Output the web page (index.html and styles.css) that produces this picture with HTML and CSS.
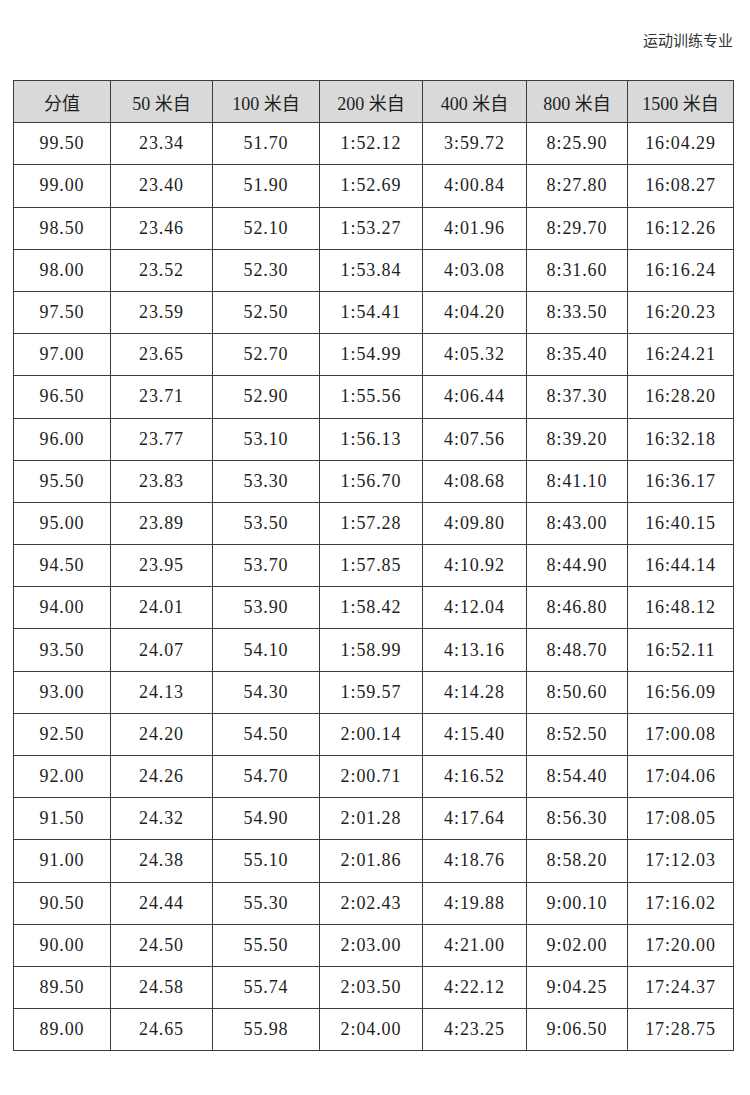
FILE: index.html
```html
<!DOCTYPE html>
<html lang="zh">
<head>
<meta charset="utf-8">
<title>运动训练专业</title>
<link rel="stylesheet" href="styles.css">
</head>
<body>
<div class="page">
  <div class="caption">运动训练专业</div>
  <table class="score">
    <colgroup>
      <col class="c1"><col class="c2"><col class="c3"><col class="c4"><col class="c5"><col class="c6"><col class="c7">
    </colgroup>
    <thead>
      <tr><th>分值</th><th>50 米自</th><th>100 米自</th><th>200 米自</th><th>400 米自</th><th>800 米自</th><th>1500 米自</th></tr>
    </thead>
    <tbody>
      <tr><td>99.50</td><td>23.34</td><td>51.70</td><td>1:52.12</td><td>3:59.72</td><td>8:25.90</td><td>16:04.29</td></tr>
      <tr><td>99.00</td><td>23.40</td><td>51.90</td><td>1:52.69</td><td>4:00.84</td><td>8:27.80</td><td>16:08.27</td></tr>
      <tr><td>98.50</td><td>23.46</td><td>52.10</td><td>1:53.27</td><td>4:01.96</td><td>8:29.70</td><td>16:12.26</td></tr>
      <tr><td>98.00</td><td>23.52</td><td>52.30</td><td>1:53.84</td><td>4:03.08</td><td>8:31.60</td><td>16:16.24</td></tr>
      <tr><td>97.50</td><td>23.59</td><td>52.50</td><td>1:54.41</td><td>4:04.20</td><td>8:33.50</td><td>16:20.23</td></tr>
      <tr><td>97.00</td><td>23.65</td><td>52.70</td><td>1:54.99</td><td>4:05.32</td><td>8:35.40</td><td>16:24.21</td></tr>
      <tr><td>96.50</td><td>23.71</td><td>52.90</td><td>1:55.56</td><td>4:06.44</td><td>8:37.30</td><td>16:28.20</td></tr>
      <tr><td>96.00</td><td>23.77</td><td>53.10</td><td>1:56.13</td><td>4:07.56</td><td>8:39.20</td><td>16:32.18</td></tr>
      <tr><td>95.50</td><td>23.83</td><td>53.30</td><td>1:56.70</td><td>4:08.68</td><td>8:41.10</td><td>16:36.17</td></tr>
      <tr><td>95.00</td><td>23.89</td><td>53.50</td><td>1:57.28</td><td>4:09.80</td><td>8:43.00</td><td>16:40.15</td></tr>
      <tr><td>94.50</td><td>23.95</td><td>53.70</td><td>1:57.85</td><td>4:10.92</td><td>8:44.90</td><td>16:44.14</td></tr>
      <tr><td>94.00</td><td>24.01</td><td>53.90</td><td>1:58.42</td><td>4:12.04</td><td>8:46.80</td><td>16:48.12</td></tr>
      <tr><td>93.50</td><td>24.07</td><td>54.10</td><td>1:58.99</td><td>4:13.16</td><td>8:48.70</td><td>16:52.11</td></tr>
      <tr><td>93.00</td><td>24.13</td><td>54.30</td><td>1:59.57</td><td>4:14.28</td><td>8:50.60</td><td>16:56.09</td></tr>
      <tr><td>92.50</td><td>24.20</td><td>54.50</td><td>2:00.14</td><td>4:15.40</td><td>8:52.50</td><td>17:00.08</td></tr>
      <tr><td>92.00</td><td>24.26</td><td>54.70</td><td>2:00.71</td><td>4:16.52</td><td>8:54.40</td><td>17:04.06</td></tr>
      <tr><td>91.50</td><td>24.32</td><td>54.90</td><td>2:01.28</td><td>4:17.64</td><td>8:56.30</td><td>17:08.05</td></tr>
      <tr><td>91.00</td><td>24.38</td><td>55.10</td><td>2:01.86</td><td>4:18.76</td><td>8:58.20</td><td>17:12.03</td></tr>
      <tr><td>90.50</td><td>24.44</td><td>55.30</td><td>2:02.43</td><td>4:19.88</td><td>9:00.10</td><td>17:16.02</td></tr>
      <tr><td>90.00</td><td>24.50</td><td>55.50</td><td>2:03.00</td><td>4:21.00</td><td>9:02.00</td><td>17:20.00</td></tr>
      <tr><td>89.50</td><td>24.58</td><td>55.74</td><td>2:03.50</td><td>4:22.12</td><td>9:04.25</td><td>17:24.37</td></tr>
      <tr><td>89.00</td><td>24.65</td><td>55.98</td><td>2:04.00</td><td>4:23.25</td><td>9:06.50</td><td>17:28.75</td></tr>
    </tbody>
  </table>
</div>
</body>
</html>
```
FILE: styles.css
```css
html, body {
  margin: 0;
  padding: 0;
  background: #ffffff;
}

.page {
  width: 750px;
  padding: 30px 0 0 13px;
  box-sizing: border-box;
}

.caption {
  width: 720px;
  text-align: right;
  font-family: "Noto Sans CJK SC", sans-serif;
  font-size: 15px;
  line-height: 20px;
  color: #333333;
  height: 20px;
  margin-bottom: 30px;
}

.score {
  table-layout: fixed;
  width: 720px;
  border-collapse: collapse;
  font-family: "Liberation Serif", "Noto Sans CJK SC", serif;
  color: #1e1e1e;
}

.c1 { width: 97px; }
.c2 { width: 102px; }
.c3 { width: 107px; }
.c4 { width: 103px; }
.c5 { width: 104px; }
.c6 { width: 101px; }
.c7 { width: 106px; }

.score th,
.score td {
  border: 1.4px solid #3c3c3c;
  text-align: center;
  vertical-align: middle;
  padding: 0;
  height: 41.2px;
  font-size: 18px;
  letter-spacing: 0.9px;
  font-weight: normal;
}

.score th {
  background: #d9d9d9;
  letter-spacing: 0;
}
```
